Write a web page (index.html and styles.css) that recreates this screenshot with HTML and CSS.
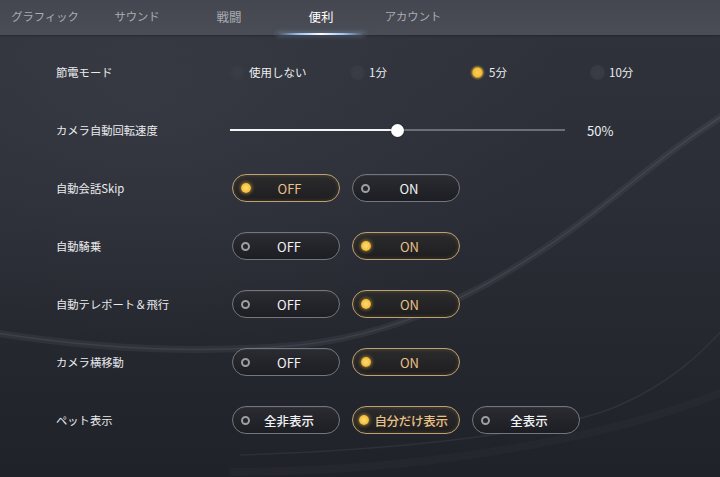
FILE: index.html
```html
<!DOCTYPE html>
<html lang="ja">
<head>
<meta charset="utf-8">
<link rel="stylesheet" href="styles.css">
</head>
<body>
<div class="screen">
  <svg class="bg-curves" width="720" height="477" viewBox="0 0 720 477">
    <path d="M-10 332 C 100 350, 200 354, 300 345 C 420 332, 520 272, 610 200 C 650 168, 690 135, 740 105" fill="none" stroke="rgba(190,196,212,0.07)" stroke-width="7"/>
    <path d="M-10 332 C 100 350, 200 354, 300 345 C 420 332, 520 272, 610 200 C 650 168, 690 135, 740 105" fill="none" stroke="rgba(210,215,230,0.09)" stroke-width="1.5"/>
    <path d="M240 455 C 400 450, 560 432, 620 405 C 670 383, 700 355, 730 322" fill="none" stroke="rgba(200,205,220,0.08)" stroke-width="1.5"/>
    <path d="M230 472 C 400 472, 600 445, 740 385" fill="none" stroke="rgba(200,205,220,0.03)" stroke-width="8"/>
  </svg>

  <nav class="tabs">
    <div class="tab">グラフィック</div>
    <div class="tab">サウンド</div>
    <div class="tab k">戦闘</div>
    <div class="tab k active">便利</div>
    <div class="tab">アカウント</div>
  </nav>

  <main class="settings">
    <div class="row">
      <div class="label">節電モード</div>
      <div class="radios">
        <div class="radio"><span class="rdot"></span><span>使用しない</span></div>
        <div class="radio"><span class="rdot"></span><span>1分</span></div>
        <div class="radio"><span class="rdot on"></span><span>5分</span></div>
        <div class="radio"><span class="rdot"></span><span>10分</span></div>
      </div>
    </div>

    <div class="row">
      <div class="label">カメラ自動回転速度</div>
      <div class="slider-wrap">
        <div class="slider">
          <div class="fill" style="width:50%"></div>
          <div class="knob" style="left:50%"></div>
        </div>
        <div class="value">50%</div>
      </div>
    </div>

    <div class="row">
      <div class="label">自動会話Skip</div>
      <div class="pills">
        <div class="pill sel"><span class="dot"></span><span class="txt">OFF</span></div>
        <div class="pill"><span class="dot"></span><span class="txt">ON</span></div>
      </div>
    </div>

    <div class="row">
      <div class="label">自動騎乗</div>
      <div class="pills">
        <div class="pill"><span class="dot"></span><span class="txt">OFF</span></div>
        <div class="pill sel"><span class="dot"></span><span class="txt">ON</span></div>
      </div>
    </div>

    <div class="row">
      <div class="label">自動テレポート＆飛行</div>
      <div class="pills">
        <div class="pill"><span class="dot"></span><span class="txt">OFF</span></div>
        <div class="pill sel"><span class="dot"></span><span class="txt">ON</span></div>
      </div>
    </div>

    <div class="row">
      <div class="label">カメラ横移動</div>
      <div class="pills">
        <div class="pill"><span class="dot"></span><span class="txt">OFF</span></div>
        <div class="pill sel"><span class="dot"></span><span class="txt">ON</span></div>
      </div>
    </div>

    <div class="row">
      <div class="label">ペット表示</div>
      <div class="pills">
        <div class="pill"><span class="dot"></span><span class="txt jp">全非表示</span></div>
        <div class="pill sel tight"><span class="dot"></span><span class="txt jp">自分だけ表示</span></div>
        <div class="pill"><span class="dot"></span><span class="txt jp">全表示</span></div>
      </div>
    </div>
  </main>
</div>
</body>
</html>
```

FILE: styles.css
```css
* { box-sizing: border-box; }

html, body {
  margin: 0;
  padding: 0;
  width: 720px;
  height: 477px;
  overflow: hidden;
}

body {
  font-family: "Noto Sans CJK JP", "Noto Sans", sans-serif;
  color: #e6e7ea;
  background: #26282f;
}

.screen {
  position: relative;
  width: 720px;
  height: 477px;
  overflow: hidden;
  background:
    radial-gradient(ellipse 600px 360px at 20% 20%, rgba(70,74,84,0.35), rgba(70,74,84,0) 70%),
    linear-gradient(180deg, #30333b 0%, #2a2d35 45%, #202229 100%);
}

.bg-curves {
  position: absolute;
  left: 0;
  top: 0;
  pointer-events: none;
}

/* Tabs */
.tabs {
  position: relative;
  display: flex;
  height: 35px;
  margin: 0;
  padding-left: 0;
  background: linear-gradient(180deg, #44474f 0%, #4a4d55 100%);
  box-shadow: 0 1px 2px rgba(0,0,0,0.25);
}

.tab {
  position: relative;
  width: 92px;
  flex: none;
  display: flex;
  align-items: center;
  justify-content: center;
  padding-bottom: 3px;
  font-size: 11.3px;
  color: #a9acb2;
}
.tab.k { font-size: 12.5px; }
.tab:first-child { margin-left: -1px; }

.tab.active {
  color: #ffffff;
}
.tab.active::after {
  content: "";
  position: absolute;
  left: 2px;
  right: 2px;
  bottom: 0;
  height: 2px;
  background: linear-gradient(90deg, rgba(140,190,255,0) 0%, rgba(170,210,255,0.9) 25%, #ffffff 50%, rgba(170,210,255,0.9) 75%, rgba(140,190,255,0) 100%);
  box-shadow: 0 0 5px rgba(160,200,255,0.6);
}

/* Settings rows */
.settings {
  position: relative;
  padding: 8px 0 0 56px;
}

.row {
  display: grid;
  grid-template-columns: 174px 1fr;
  align-items: center;
  height: 58px;
}

.label {
  font-size: 11.3px;
  color: #eaebee;
  white-space: nowrap;
}

/* Radios */
.radios {
  display: flex;
}
.radio {
  width: 120px;
  display: flex;
  align-items: center;
  gap: 4px;
  font-size: 11.5px;
  color: #eceef0;
}
.rdot {
  width: 15px;
  height: 15px;
  border-radius: 50%;
  background: radial-gradient(circle, #3b3e46 0%, #373a42 65%, rgba(55,58,66,0.5) 100%);
  flex: none;
}
.rdot.on {
  background: radial-gradient(circle, #ffd25a 0%, #f3bb36 42%, rgba(243,187,54,0.35) 55%, rgba(243,187,54,0) 75%);
}

/* Slider */
.slider-wrap {
  display: flex;
  align-items: center;
  gap: 22px;
}
.slider {
  position: relative;
  width: 335px;
  height: 2px;
  background: #6c6f75;
}
.slider .fill {
  position: absolute;
  left: 0;
  top: 0;
  height: 2px;
  background: #f4f5f7;
}
.slider .knob {
  position: absolute;
  top: 50%;
  width: 13px;
  height: 13px;
  margin: -6.5px 0 0 -6.5px;
  border-radius: 50%;
  background: #ffffff;
  box-shadow: 0 0 2px rgba(0,0,0,0.5);
}
.value {
  font-size: 13px;
  color: #eceef0;
}

/* Pills */
.pills {
  display: flex;
  gap: 12px;
  margin-left: 2px;
}
.pill {
  width: 108px;
  height: 28px;
  border-radius: 14px;
  border: 1.5px solid #73767c;
  background: linear-gradient(180deg, #2a2c32 0%, #1d1e23 100%);
  display: flex;
  align-items: center;
  padding: 0 11px 0 8px;
  box-shadow: inset 0 1px 0 rgba(255,255,255,0.05);
}
.pill .dot {
  width: 9px;
  height: 9px;
  border-radius: 50%;
  border: 2px solid #9c9ea3;
  background: #23252a;
  flex: none;
}
.pill .txt {
  flex: 1;
  text-align: center;
  font-size: 13px;
  color: #f1f2f4;
  white-space: nowrap;
}
.pill .txt.jp {
  font-size: 12.5px;
  font-weight: 500;
}
.pill.sel {
  border-color: #bfa170;
  background: linear-gradient(180deg, #2c2b2c 0%, #1e1d1f 100%);
  box-shadow: inset 0 0 4px rgba(200,170,110,0.25);
}
.pill.sel .dot {
  border: none;
  width: 10px;
  height: 10px;
  background: radial-gradient(circle, #ffe07a 0%, #f5be3a 60%, #e0a52a 100%);
  box-shadow: 0 0 4px rgba(255,200,70,0.8);
}
.pill.sel .txt {
  color: #e8c185;
}
.pill.tight {
  padding-left: 6px;
  padding-right: 6px;
}
.pill.tight .txt {
  letter-spacing: -0.3px;
}
```
